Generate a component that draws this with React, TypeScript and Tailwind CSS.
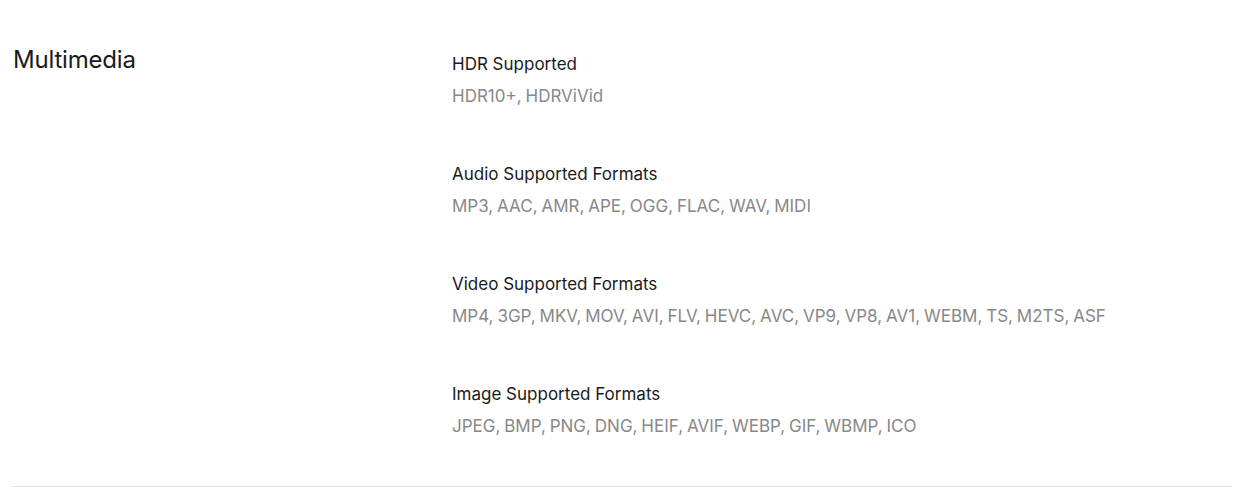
const specs = [
  { label: 'HDR Supported', value: 'HDR10+, HDRViVid' },
  { label: 'Audio Supported Formats', value: 'MP3, AAC, AMR, APE, OGG, FLAC, WAV, MIDI' },
  {
    label: 'Video Supported Formats',
    value: 'MP4, 3GP, MKV, MOV, AVI, FLV, HEVC, AVC, VP9, VP8, AV1, WEBM, TS, M2TS, ASF',
  },
  { label: 'Image Supported Formats', value: 'JPEG, BMP, PNG, DNG, HEIF, AVIF, WEBP, GIF, WBMP, ICO' },
];

export default function App() {
  return (
    <div className="min-h-screen bg-white font-['Inter',sans-serif]">
      <section className="ml-3 mr-[7px] flex border-b border-[#e3e3e3] pt-[44px] pb-[48px]">
        <h2 className="w-[440px] shrink-0 pl-px text-[24px] leading-[32px] tracking-[-0.2px] text-[#1a1a1a]">
          Multimedia
        </h2>
        <div className="flex flex-col gap-[54px] pt-[8px]">
          {specs.map((spec) => (
            <div key={spec.label} className="flex flex-col gap-[8px]">
              <p className="text-[17px] leading-[24px] text-[#1a1a1a]">{spec.label}</p>
              <p className="text-[17px] leading-[24px] text-[#888888] [word-spacing:-0.9px]">{spec.value}</p>
            </div>
          ))}
        </div>
      </section>
    </div>
  );
}
